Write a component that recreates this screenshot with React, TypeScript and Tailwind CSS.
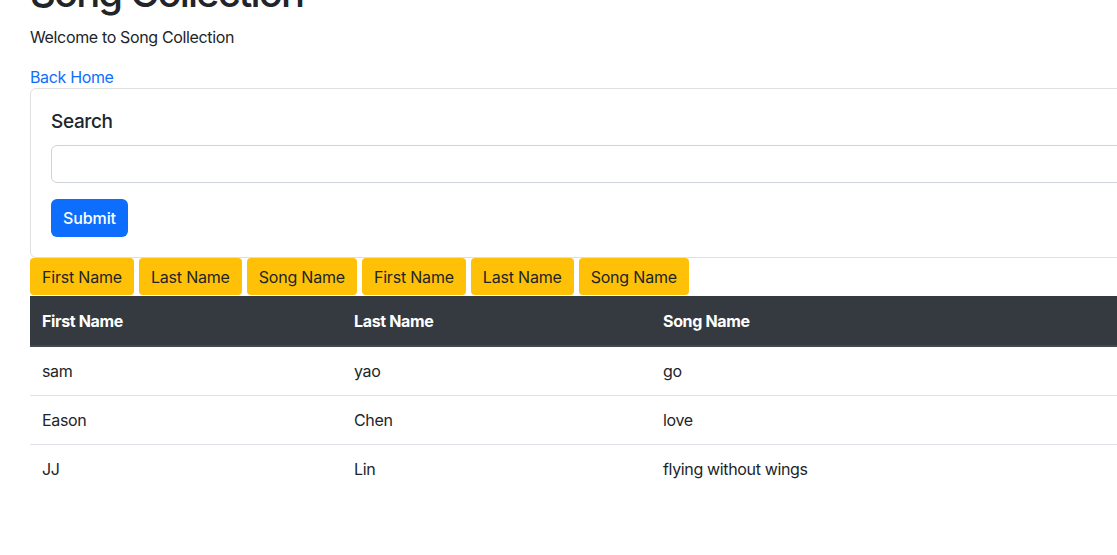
const songs = [
  { first: 'sam', last: 'yao', song: 'go' },
  { first: 'Eason', last: 'Chen', song: 'love' },
  { first: 'JJ', last: 'Lin', song: 'flying without wings' },
]

const sortButtons = ['First Name', 'Last Name', 'Song Name', 'First Name', 'Last Name', 'Song Name']

export default function App() {
  return (
    <div
      className="w-[1117px] h-[555px] overflow-hidden bg-white text-[#212529] text-base tracking-[-0.35px]"
      style={{ fontFamily: 'Inter, "Noto Sans", sans-serif' }}
    >
      <div className="w-[1300px] pl-[30px]">
        <h1 className="mt-[-31px] mb-2 text-[40px] leading-[48px] font-medium tracking-[-1.9px]">Song Collection</h1>
        <p className="mb-4 leading-6">Welcome to Song Collection</p>
        <a href="#" className="text-[#0d6efd] leading-6 block">
          Back Home
        </a>

        {/* Search card */}
        <div className="border border-[#dfdfdf] rounded-md px-5 pt-[21px] pb-5 mt-[-1px]">
          <h5 className="text-[19px] leading-6 font-medium mb-[11px]">Search</h5>
          <input
            type="text"
            className="block w-full h-[38px] border border-[#ced4da] rounded-md px-3"
          />
          <button className="mt-4 h-[38px] px-3 bg-[#0d6efd] text-white rounded-md font-medium tracking-[-0.1px]">
            Submit
          </button>
        </div>

        {/* Sort buttons */}
        <div className="flex gap-[5px]">
          {sortButtons.map((label, i) => (
            <button
              key={i}
              className="h-[37px] px-3 bg-[#ffc107] rounded-[4px] text-[#212529] leading-6 tracking-[-0.2px]"
            >
              {label}
            </button>
          ))}
        </div>

        {/* Table */}
        <table className="w-full border-collapse mt-[1px]">
          <thead>
            <tr className="bg-[#343a40] text-white border-b-2 border-[#41484f]">
              <th className="w-[312px] h-[50px] px-3 pt-[1px] text-left font-bold">First Name</th>
              <th className="w-[309px] px-3 pt-[1px] text-left font-bold">Last Name</th>
              <th className="px-3 pt-[1px] text-left font-bold">Song Name</th>
            </tr>
          </thead>
          <tbody>
            {songs.map((s, i) => (
              <tr key={i} className={i < songs.length - 1 ? 'border-b border-[#dee2e6]' : ''}>
                <td className="h-[49px] px-3 pt-[1px]">{s.first}</td>
                <td className="px-3 pt-[1px]">{s.last}</td>
                <td className="px-3 pt-[1px]">{s.song}</td>
              </tr>
            ))}
          </tbody>
        </table>
      </div>
    </div>
  )
}
